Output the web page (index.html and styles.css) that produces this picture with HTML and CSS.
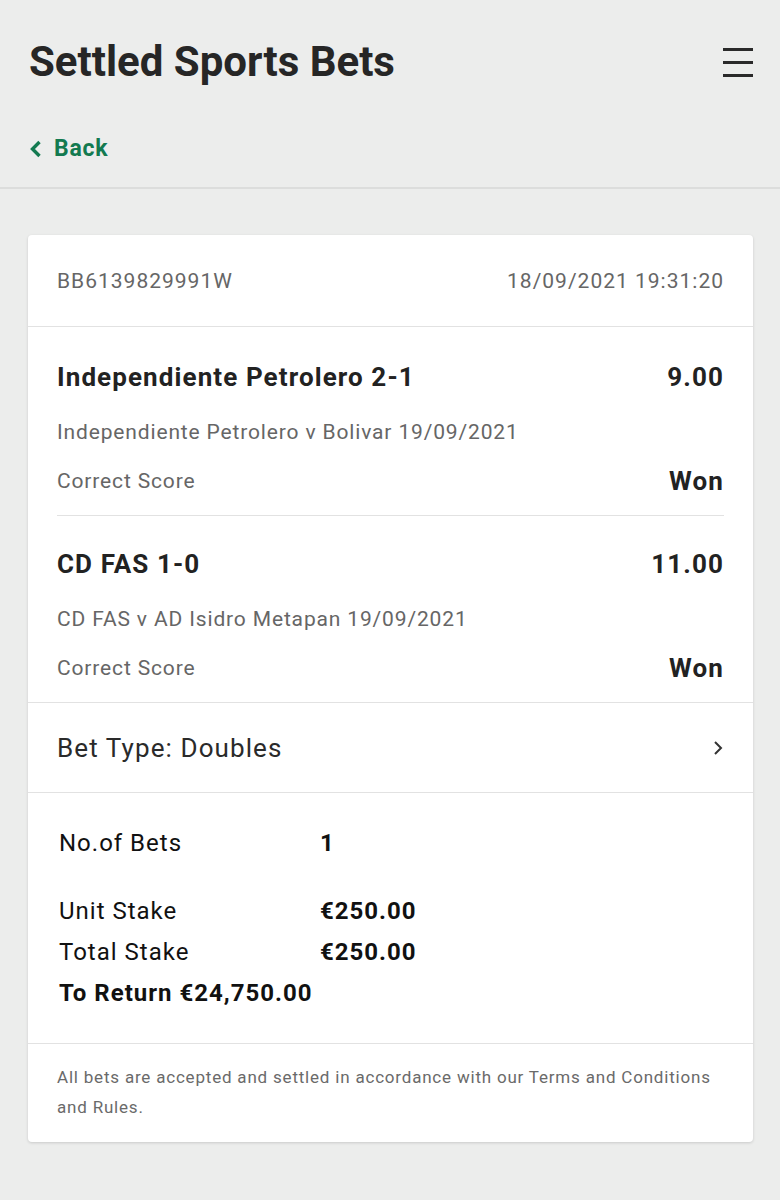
FILE: index.html
```html
<!DOCTYPE html>
<html lang="en">
<head>
    <meta charset="UTF-8">
    <meta name="viewport" content="width=device-width, initial-scale=1.0">
    <title>Settled Sports Bets</title>
    <link rel="stylesheet" href="styles.css">
</head>
<body>
    <div class="top">
        <div class="title-row">
            <h1 class="title">Settled Sports Bets</h1>
            <div class="menu">
                <span></span>
                <span></span>
                <span></span>
            </div>
        </div>
        <a class="back" href="#">
            <svg width="13" height="20" viewBox="0 0 13 20"><path d="M10.5 3 L3.5 10 L10.5 17" fill="none" stroke="#137a50" stroke-width="3.4"/></svg>
            Back
        </a>
    </div>

    <div class="card">
        <div class="card-head">
            <span>BB6139829991W</span>
            <span>18/09/2021 19:31:20</span>
        </div>

        <div class="selections">
            <div class="selection">
                <div class="sel-line">
                    <span class="sel-name">Independiente Petrolero 2-1</span>
                    <span class="sel-odds">9.00</span>
                </div>
                <div class="sel-event">Independiente Petrolero v Bolivar 19/09/2021</div>
                <div class="sel-line sel-market">
                    <span>Correct Score</span>
                    <span class="sel-result">Won</span>
                </div>
            </div>
            <div class="selection">
                <div class="sel-line">
                    <span class="sel-name">CD FAS 1-0</span>
                    <span class="sel-odds">11.00</span>
                </div>
                <div class="sel-event">CD FAS v AD Isidro Metapan 19/09/2021</div>
                <div class="sel-line sel-market">
                    <span>Correct Score</span>
                    <span class="sel-result">Won</span>
                </div>
            </div>
        </div>

        <div class="bet-type">
            <span>Bet Type: Doubles</span>
            <svg width="12" height="16" viewBox="0 0 12 16"><path d="M3 2 L9 8 L3 14" fill="none" stroke="#333" stroke-width="2"/></svg>
        </div>

        <div class="summary">
            <div class="sum-row first">
                <span class="sum-label">No.of Bets</span>
                <span class="sum-value">1</span>
            </div>
            <div class="sum-row">
                <span class="sum-label">Unit Stake</span>
                <span class="sum-value">€250.00</span>
            </div>
            <div class="sum-row">
                <span class="sum-label">Total Stake</span>
                <span class="sum-value">€250.00</span>
            </div>
            <div class="sum-row">
                <span class="sum-return">To Return €24,750.00</span>
            </div>
        </div>

        <div class="terms">
            All bets are accepted and settled in accordance with our Terms and Conditions and Rules.
        </div>
    </div>
</body>
</html>
```

FILE: styles.css
```css
body {
    margin: 0;
    background: #ecedec;
    font-family: Roboto, "Noto Sans", sans-serif;
    color: #222;
}

.top {
    padding: 37px 27px 0 29px;
    border-bottom: 2px solid #dcdddc;
}

.title-row {
    display: flex;
    justify-content: space-between;
    align-items: center;
}

.title {
    margin: 0;
    font-size: 42px;
    line-height: 50px;
    font-weight: bold;
    color: #262626;
}

.menu {
    display: flex;
    flex-direction: column;
    gap: 10px;
    width: 30px;
}

.menu span {
    display: block;
    height: 3px;
    background: #2a2a2a;
}

.back {
    display: flex;
    align-items: center;
    gap: 12px;
    margin-top: 47px;
    padding-bottom: 23px;
    font-size: 23px;
    line-height: 30px;
    font-weight: bold;
    letter-spacing: 0.8px;
    color: #137a50;
    text-decoration: none;
}

.card {
    margin: 46px 27px 40px 28px;
    background: #fff;
    border-radius: 4px;
    box-shadow: 0 1px 3px rgba(0, 0, 0, 0.15);
}

.card-head {
    display: flex;
    justify-content: space-between;
    align-items: center;
    height: 91px;
    padding: 0 29px;
    font-size: 21px;
    letter-spacing: 1px;
    color: #666;
    border-bottom: 1px solid #e2e2e2;
}

.selections {
    border-bottom: 1px solid #e2e2e2;
}

.selection {
    margin: 0 29px;
    padding: 34px 0 18px;
    border-bottom: 1px solid #e2e2e2;
}

.selection + .selection {
    padding-top: 32px;
}

.selection:last-child {
    border-bottom: none;
}

.sel-line {
    display: flex;
    justify-content: space-between;
    align-items: center;
    line-height: 32px;
}

.sel-name,
.sel-odds,
.sel-result {
    font-size: 26px;
    font-weight: bold;
    letter-spacing: 1.1px;
    color: #222;
}

.sel-event {
    margin-top: 23px;
    line-height: 32px;
    font-size: 21px;
    letter-spacing: 0.85px;
    color: #666;
}

.sel-market {
    margin-top: 17px;
    font-size: 21px;
    letter-spacing: 0.85px;
    color: #666;
}

.bet-type {
    display: flex;
    justify-content: space-between;
    align-items: center;
    height: 89px;
    padding: 0 29px;
    font-size: 26px;
    letter-spacing: 1.1px;
    color: #2a2a2a;
    border-bottom: 1px solid #e2e2e2;
}

.summary {
    padding: 30px 29px 29px 31px;
    border-bottom: 1px solid #e2e2e2;
}

.sum-row {
    display: flex;
    line-height: 41px;
    font-size: 24px;
    letter-spacing: 1px;
    color: #111;
}

.sum-row.first {
    margin-bottom: 27px;
}

.sum-label {
    width: 261px;
}

.sum-value,
.sum-return {
    font-weight: bold;
}

.terms {
    padding: 18px 29px 20px;
    font-size: 17px;
    line-height: 30px;
    letter-spacing: 0.8px;
    color: #6a6a6a;
}
```
